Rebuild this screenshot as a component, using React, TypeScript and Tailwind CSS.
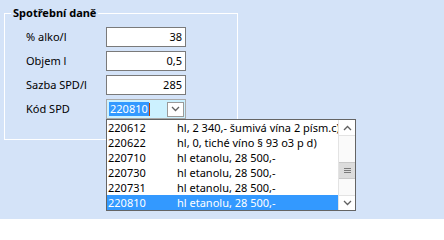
import React from "react";

const rows = [
  { code: "220612", desc: "hl, 2 340,- šumivá vína 2 písm.c)" },
  { code: "220622", desc: "hl, 0, tiché víno § 93 o3 p d)" },
  { code: "220710", desc: "hl etanolu, 28 500,-" },
  { code: "220730", desc: "hl etanolu, 28 500,-" },
  { code: "220731", desc: "hl etanolu, 28 500,-" },
  { code: "220810", desc: "hl etanolu, 28 500,-", sel: true },
];

function Chevron({ up = false }: { up?: boolean }) {
  return (
    <svg width="9" height="6" viewBox="0 0 9 6">
      <path
        d={up ? "M1 5 L4.5 1.5 L8 5" : "M1 1 L4.5 4.5 L8 1"}
        fill="none"
        stroke="#606060"
        strokeWidth="1.3"
      />
    </svg>
  );
}

export default function App() {
  const fields = [
    { label: "% alko/l", value: "38" },
    { label: "Objem l", value: "0,5" },
    { label: "Sazba SPD/l", value: "285" },
  ];
  return (
    <div className="relative w-[444px] h-[219px] overflow-hidden bg-[#d4e3f8] text-[11px] text-black font-['Noto_Sans',sans-serif]">
      <div className="relative ml-[4px] mt-[13px] w-[234px] h-[127px] border border-white">
        <div className="absolute left-[6px] -top-[9px] px-[2px] bg-[#d4e3f8] font-bold text-[11px] leading-[16px]">
          Spotřební daně
        </div>
        <div className="pt-[13px] pl-[21px] grid grid-cols-[80px_80px] gap-y-[4px]">
          {fields.map((f) => (
            <React.Fragment key={f.label}>
              <div className="h-[20px] flex items-center">{f.label}</div>
              <div className="h-[20px] border border-[#7a7a7a] bg-white flex items-center justify-end pr-[3px]">
                {f.value}
              </div>
            </React.Fragment>
          ))}
          <div className="h-[20px] flex items-center">Kód SPD</div>
          <div className="h-[20px] border border-[#a9a9a9] bg-[#ccf1ff] flex items-center pl-[2px] pr-[1px]">
            <span className="bg-[#3399ff] text-white leading-[14px] px-[1px]">220810</span>
            <span className="w-[1px] h-[13px] bg-[#c04000]" />
            <div className="ml-auto w-[17px] h-[15px] border border-[#9a9a9a] bg-white flex items-center justify-center">
              <Chevron />
            </div>
          </div>
        </div>
      </div>

      <div className="absolute left-[106px] top-[119px] w-[250px] h-[92px] border border-[#646464] bg-white flex">
        <div className="flex-1 overflow-hidden">
          {rows.map((r) => (
            <div
              key={r.code}
              className={
                "h-[15px] leading-[15px] flex whitespace-nowrap " +
                (r.sel ? "bg-[#3399ff] text-white" : "")
              }
            >
              <span className="w-[70px] shrink-0 pl-[1px]">{r.code}</span>
              <span>{r.desc}</span>
            </div>
          ))}
        </div>
        <div className="w-[17px] shrink-0 border-l border-[#e3e3e3] bg-[#fafafa] flex flex-col">
          <div className="h-[16px] border-b border-[#e3e3e3] bg-white flex items-center justify-center">
            <Chevron up />
          </div>
          <div className="h-[26px]" />
          <div className="h-[17px] bg-[#dcdcdc] border-y border-[#c8c8c8] flex flex-col items-center justify-center gap-[1px]">
            <div className="w-[7px] h-[1px] bg-[#7a7a7a]" />
            <div className="w-[7px] h-[1px] bg-[#7a7a7a]" />
            <div className="w-[7px] h-[1px] bg-[#7a7a7a]" />
          </div>
          <div className="flex-1" />
          <div className="h-[15px] border-t border-[#e3e3e3] bg-white flex items-center justify-center">
            <Chevron />
          </div>
        </div>
      </div>
    </div>
  );
}
